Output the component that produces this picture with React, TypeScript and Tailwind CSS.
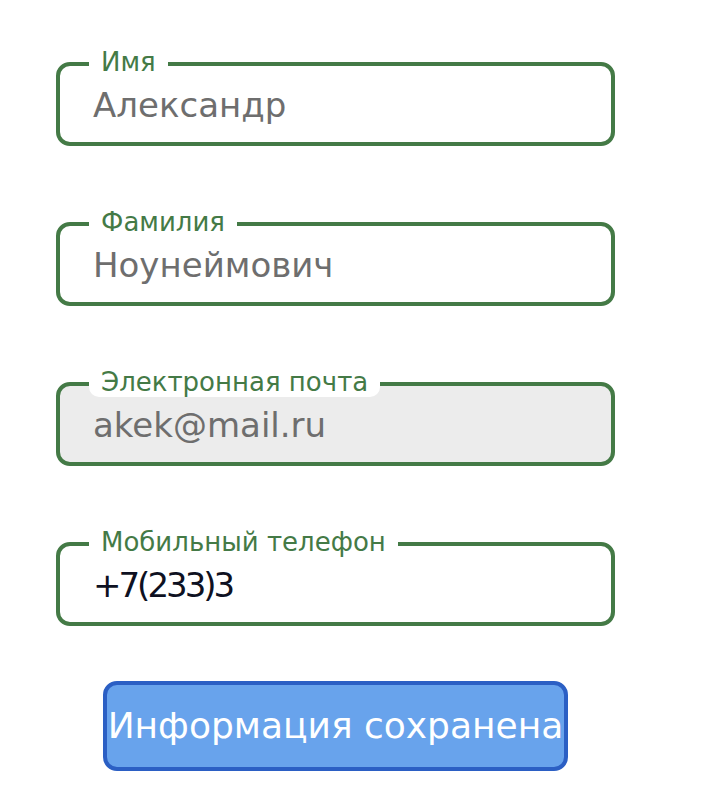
const fields = [
  { label: "Имя", value: "Александр", filled: false, dark: false },
  { label: "Фамилия", value: "Ноунеймович", filled: false, dark: false },
  { label: "Электронная почта", value: "akek@mail.ru", filled: true, dark: false },
  { label: "Мобильный телефон", value: "+7(233)3", filled: false, dark: true },
]

const App = () => {
  return (
    <div className="min-h-screen bg-white pt-[62px] pl-[56px]" style={{ fontFamily: '"DejaVu Sans", "Noto Sans", sans-serif' }}>
      <div className="flex w-[559px] flex-col items-center">
        <div className="flex w-full flex-col gap-[76px]">
          {fields.map((f) => (
            <div
              key={f.label}
              className={`relative flex h-[84px] w-full items-center rounded-[14px] border-[4px] border-[#447a46] pl-[33px] ${f.filled ? "bg-[#ececec]" : "bg-white"}`}
            >
              <span className="absolute -top-[19px] left-[29px] rounded-[10px] bg-white px-[12px] text-[26px] leading-[30px] text-[#447a46]">
                {f.label}
              </span>
              <span
                className={`mt-[3px] text-[34px] ${f.dark ? "tracking-[-3px] text-[#0e1122]" : "text-[#6e6e6e]"}`}
              >
                {f.value}
              </span>
            </div>
          ))}
        </div>
        <button className="mt-[55px] h-[90px] whitespace-nowrap rounded-[14px] border-[4px] border-[#2b5fc4] bg-[#68a3ec] px-[1px] text-[36px] text-white">
          Информация сохранена
        </button>
      </div>
    </div>
  )
}

export default App
